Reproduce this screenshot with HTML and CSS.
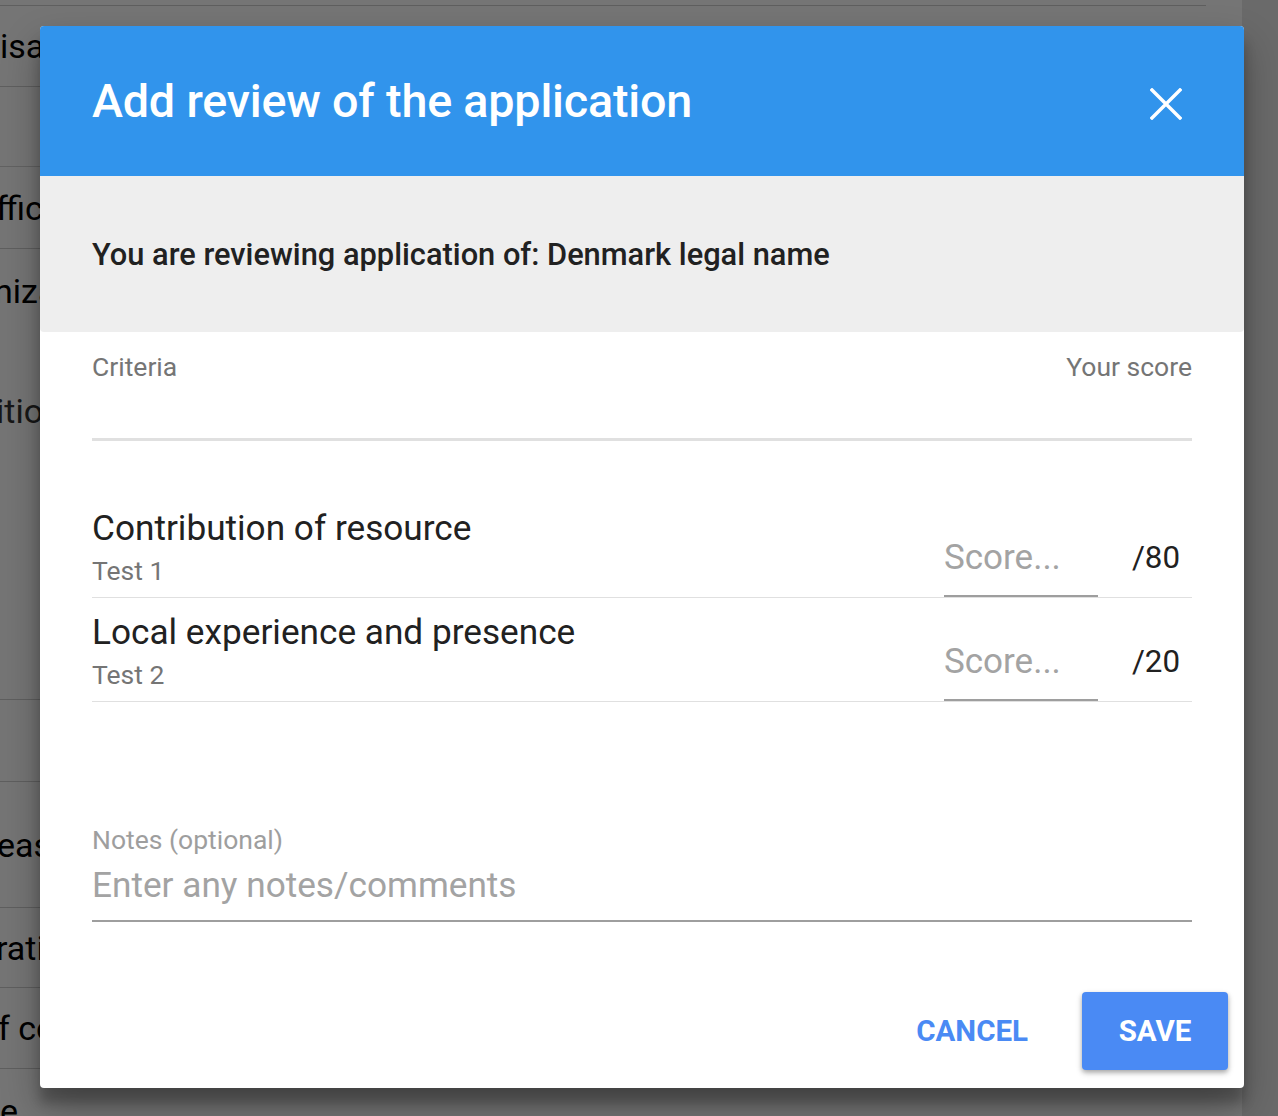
FILE: index.html
```html
<!DOCTYPE html>
<html lang="en">
<head>
<meta charset="utf-8">
<title>Add review of the application</title>
<link rel="stylesheet" href="styles.css">
</head>
<body>
<div class="page">
  <div class="page-main">
    <div class="bg-row bg-r0"></div>
    <div class="bg-row bg-r1"><span class="bg-text">isation</span></div>
    <div class="bg-row bg-r2"></div>
    <div class="bg-row bg-r3"><span class="bg-text">fficer</span></div>
    <div class="bg-row bg-r4">
      <span class="bg-text bg-t-a">nization</span>
      <span class="bg-text bg-t-b">ition</span>
    </div>
    <div class="bg-row bg-r5"></div>
    <div class="bg-row bg-r6"><span class="bg-text">eason</span></div>
    <div class="bg-row bg-r7"><span class="bg-text">ration</span></div>
    <div class="bg-row bg-r8"><span class="bg-text">f company</span></div>
    <div class="bg-row bg-r9"><span class="bg-text">e</span></div>
  </div>
  <div class="page-side"></div>
</div>
<div class="overlay"></div>
<div class="dialog">
  <div class="dialog-header">
    <h1 class="dialog-title">Add review of the application</h1>
    <button class="close-btn" aria-label="Close">
      <svg width="32" height="32" viewBox="0 0 32 32"><path d="M2 2 L30 30 M30 2 L2 30" stroke="#fff" stroke-width="3.4" stroke-linecap="square" fill="none"/></svg>
    </button>
  </div>
  <div class="dialog-sub">You are reviewing application of: Denmark legal name</div>
  <div class="dialog-body">
    <div class="crit-head">
      <span class="crit-head-label">Criteria</span>
      <span class="crit-head-label">Your score</span>
    </div>
    <div class="crit-list">
      <div class="crit-row">
        <div class="crit-info">
          <div class="crit-title">Contribution of resource</div>
          <div class="crit-desc">Test 1</div>
        </div>
        <div class="score-input">Score...</div>
        <div class="score-max">/80</div>
      </div>
      <div class="crit-row">
        <div class="crit-info">
          <div class="crit-title">Local experience and presence</div>
          <div class="crit-desc">Test 2</div>
        </div>
        <div class="score-input">Score...</div>
        <div class="score-max">/20</div>
      </div>
    </div>
    <div class="notes">
      <div class="notes-label">Notes (optional)</div>
      <div class="notes-input">Enter any notes/comments</div>
    </div>
  </div>
  <div class="dialog-actions">
    <button class="btn btn-flat">CANCEL</button>
    <button class="btn btn-raised">SAVE</button>
  </div>
</div>
</body>
</html>
```
FILE: styles.css
```css
* { box-sizing: border-box; }
html, body {
  margin: 0;
  padding: 0;
}
body {
  width: 1278px;
  height: 1116px;
  overflow: hidden;
  font-family: Roboto, "Liberation Sans", sans-serif;
  position: relative;
}
.page {
  display: flex;
  height: 1116px;
}
.page-main {
  flex: 1;
  background: #ffffff;
  display: flex;
  flex-direction: column;
  overflow: hidden;
}
.page-side {
  width: 36px;
  background: #e6e6e6;
}
.bg-row {
  border-bottom: 1px solid #cfcfcf;
  display: flex;
  align-items: center;
  position: relative;
  margin-right: 36px;
  flex: none;
}
.bg-text {
  font-size: 34px;
  color: #000;
  margin-left: 0;
  white-space: nowrap;
}
.bg-r0 { height: 6px; }
.bg-r1 { height: 81px; }
.bg-r2 { height: 80px; border-bottom-color: #d6d6d6; }
.bg-r3 { height: 82px; }
.bg-r4 {
  height: 451px;
  flex-direction: column;
  align-items: flex-start;
  padding-top: 21px;
}
.bg-r4 .bg-t-a { line-height: 42px; margin-left: -6px; }
.bg-t-b { line-height: 42px; margin-top: 78px; color: #333; margin-left: -4px; }
.bg-r3 .bg-text { margin-left: -4px; }
.bg-r5 { height: 82px; }
.bg-r6 { height: 126px; }
.bg-r7 { height: 80px; }
.bg-r8 { height: 81px; }
.bg-r9 { flex: 1; border-bottom: none; align-items: flex-start; padding-top: 22px; }
.bg-r6 .bg-text { margin-left: -3px; }
.bg-r7 .bg-text { margin-left: -4px; }
.bg-r8 .bg-text { margin-left: -2px; }

.overlay {
  position: absolute;
  inset: 0;
  background: rgba(0, 0, 0, 0.54);
}

.dialog {
  position: absolute;
  left: 40px;
  top: 26px;
  width: 1204px;
  height: 1062px;
  background: #ffffff;
  border-radius: 4px;
  overflow: hidden;
  display: flex;
  flex-direction: column;
  box-shadow: 0 19px 38px rgba(0,0,0,0.30), 0 15px 12px rgba(0,0,0,0.22);
}
.dialog-header {
  height: 150px;
  flex: none;
  background: #3194ec;
  display: flex;
  align-items: center;
  justify-content: space-between;
  padding: 0 62px 0 52px;
}
.dialog-title {
  margin: 0;
  font-size: 46.7px;
  font-weight: 500;
  color: #ffffff;
  line-height: 56px;
  letter-spacing: -0.2px;
}
.close-btn {
  width: 32px;
  height: 32px;
  padding: 0;
  border: none;
  background: transparent;
  display: block;
  margin-top: 6px;
}
.close-btn svg { display: block; }
.dialog-sub {
  height: 156px;
  flex: none;
  background: #eeeeee;
  border-radius: 0 0 4px 4px;
  display: flex;
  align-items: center;
  padding: 0 52px;
  font-size: 30.8px;
  font-weight: 500;
  color: #212121;
}
.dialog-body {
  padding: 0 52px;
}
.crit-head {
  height: 109px;
  display: flex;
  justify-content: space-between;
  align-items: flex-start;
  padding-top: 20px;
  border-bottom: 3px solid #e0e0e0;
}
.crit-head-label {
  font-size: 26.5px;
  line-height: 30px;
  color: #757575;
}
.crit-list {
  margin-top: 53px;
}
.crit-row {
  display: flex;
  align-items: flex-end;
  height: 104px;
  border-bottom: 1px solid #e0e0e0;
}
.crit-info {
  flex: 1;
  align-self: stretch;
  padding-top: 14px;
}
.crit-title {
  font-size: 35.2px;
  line-height: 40px;
  color: #212121;
}
.crit-desc {
  font-size: 26.5px;
  line-height: 46px;
  color: #757575;
}
.score-input {
  width: 154px;
  height: 62px;
  font-size: 35px;
  line-height: 46px;
  padding-bottom: 14px;
  color: #a3a3a3;
  border-bottom: 2px solid #9e9e9e;
}
.score-max {
  width: 94px;
  height: 62px;
  text-align: right;
  padding-right: 12px;
  font-size: 31.3px;
  line-height: 46px;
  color: #212121;
}
.notes {
  margin-top: 123px;
}
.notes-label {
  font-size: 26.5px;
  line-height: 30px;
  color: #9e9e9e;
}
.notes-input {
  margin-top: 7px;
  font-size: 35.2px;
  line-height: 46px;
  padding-bottom: 12px;
  color: #a3a3a3;
  border-bottom: 2px solid #9e9e9e;
}
.dialog-actions {
  margin-top: auto;
  display: flex;
  justify-content: flex-end;
  align-items: center;
  gap: 19px;
  padding: 0 16px 18px;
}
.btn {
  height: 78px;
  border: none;
  border-radius: 4px;
  font-family: Roboto, "Liberation Sans", sans-serif;
  font-size: 29.5px;
  font-weight: 700;
  padding: 0 35px;
  cursor: pointer;
}
.btn-flat {
  background: transparent;
  color: #4a8af4;
}
.btn-raised {
  background: #4a8af4;
  color: #ffffff;
  min-width: 146px;
  box-shadow: 0 3px 6px rgba(0,0,0,0.22), 0 2px 4px rgba(0,0,0,0.18);
}
```
